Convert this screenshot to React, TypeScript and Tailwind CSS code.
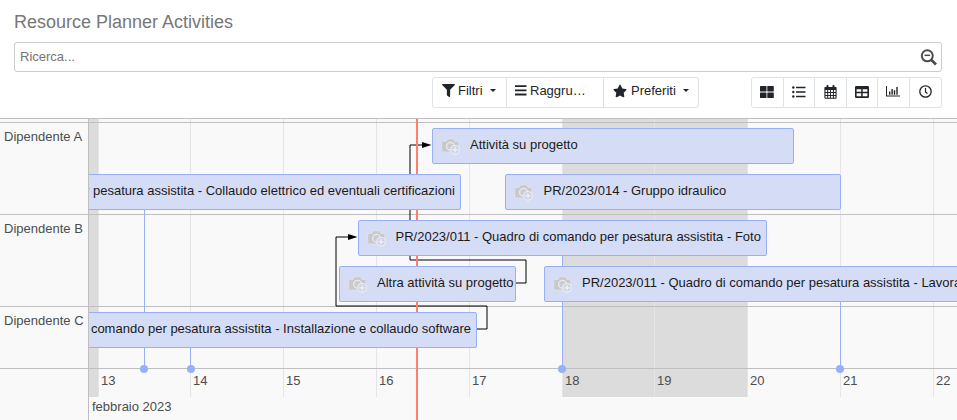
import React from "react";
import { FaFilter, FaStar } from "react-icons/fa";

type Item = { left: number; width: number; top: number; label: string; image?: boolean; pad: number; cut?: boolean };

const items: Item[] = [
  { left: 432, width: 362, top: 9, label: "Attività su progetto", image: true, pad: 37 },
  { left: -4, width: 376, top: 55, label: "r pesatura assistita - Collaudo elettrico ed eventuali certificazioni", pad: 0, cut: true },
  { left: 505, width: 336, top: 55, label: "PR/2023/014 - Gruppo idraulico", image: true, pad: 37.5 },
  { left: 358, width: 409, top: 101, label: "PR/2023/011 - Quadro di comando per pesatura assistita - Foto", image: true, pad: 36.5 },
  { left: 339, width: 177, top: 147, label: "Altra attività su progetto", image: true, pad: 37 },
  { left: 544, width: 500, top: 147, label: "PR/2023/011 - Quadro di comando per pesatura assistita - Lavorazione", image: true, pad: 37 },
  { left: -4, width: 392, top: 193, label: "comando per pesatura assistita - Installazione e collaudo software", pad: 0, cut: true },
];

const days = [
  { n: 13, x: 9 }, { n: 14, x: 101 }, { n: 15, x: 194 }, { n: 16, x: 287 }, { n: 17, x: 380 },
  { n: 18, x: 473 }, { n: 19, x: 565 }, { n: 20, x: 658 }, { n: 21, x: 751 }, { n: 22, x: 844 },
];

function Camera() {
  return (
    <svg width="20" height="18" viewBox="0 0 20 18" className="ml-2 mt-[8px] shrink-0">
      <path d="M1.500 4.500H5L6.500 1.800h6L14 4.500h2.800a1 1 0 0 1 1 1V15H1.500a.8.8 0 0 1-.8-.8V5.300a.8.8 0 0 1 .8-.8z" fill="#c9c9ca" stroke="#e2e3e8" strokeWidth=".8" />
      <circle cx="9.500" cy="9.300" r="3.900" fill="#cbcccf" stroke="#e8e9ef" strokeWidth="1.300" />
      <circle cx="14" cy="12.800" r="4.300" fill="#cdd2e0" stroke="#eceef6" strokeWidth="1.100" />
      <path d="M14 10v5.600M11.200 12.800h5.600" stroke="#f0f2f9" strokeWidth="1.300" />
    </svg>
  );
}

const viewIcons = [
  <svg key="g" width="14" height="12" viewBox="0 0 14 12" fill="currentColor"><rect width="6.500" height="5.600" rx=".6" /><rect x="7.300" width="6.500" height="5.600" rx=".6" /><rect y="6.400" width="6.500" height="5.600" rx=".6" /><rect x="7.300" y="6.400" width="6.500" height="5.600" rx=".6" /></svg>,
  <svg key="l" width="14" height="12" viewBox="0 0 14 12" fill="currentColor"><circle cx="1.300" cy="1.500" r="1.200" /><circle cx="1.300" cy="6" r="1.200" /><circle cx="1.300" cy="10.500" r="1.200" /><path d="M4 .8h9.500v1.400H4zM4 5.300h9.500v1.400H4zM4 9.800h9.500v1.400H4z" /></svg>,
  <svg key="c" width="13" height="14" viewBox="0 0 13 14" fill="currentColor"><path fillRule="evenodd" d="M1.200 2H2.500V.8a.8.8 0 0 1 .8-.8h.4a.8.8 0 0 1 .8.8V2h4V.8a.8.8 0 0 1 .8-.8h.4a.8.8 0 0 1 .8.8V2h1.300a.8.8 0 0 1 .8.8v10a1 1 0 0 1-1 1H1.400a1 1 0 0 1-1-1v-10a.8.8 0 0 1 .8-.8zM1.500 5v2h1.700V5zM4.200 5v2h1.900V5zM7 5v2h1.900V5zM9.900 5v2h1.600V5zM1.500 8v2h1.700V8zM4.200 8v2h1.900V8zM7 8v2h1.900V8zM9.900 8v2h1.600V8zM1.500 10.900v1.900h1.700v-1.900zM4.200 10.900v1.900h1.900v-1.900zM7 10.900v1.900h1.900v-1.900zM9.900 10.900v1.900h1.600v-1.900z" /></svg>,
  <svg key="t" width="14" height="12" viewBox="0 0 14 12" fill="currentColor"><path fillRule="evenodd" d="M1.200 0h11.600A1.200 1.200 0 0 1 14 1.200v9.600a1.200 1.200 0 0 1-1.200 1.200H1.200A1.200 1.200 0 0 1 0 10.800V1.200A1.200 1.200 0 0 1 1.200 0zM1.600 3.300v2.500h4.600V3.300zM7.700 3.300v2.500h4.700V3.300zM1.600 7.300v2.900h4.600V7.300zM7.700 7.300v2.900h4.700V7.300z" /></svg>,
  <svg key="b" width="14" height="11" viewBox="0 0 14 11" fill="currentColor"><path d="M0 0h1v9.600h13v1H0zM3 5.500h1.400v3.200H3zM5.400 3h1.400v5.700H5.400zM7.800 4.300h1.400v4.400H7.800zM10.300 1h1.400v7.700h-1.400z" /></svg>,
  <svg key="o" width="13" height="13" viewBox="0 0 13 13" fill="none" stroke="currentColor"><circle cx="6.500" cy="6.500" r="5.700" strokeWidth="1.300" /><path d="M6.500 3v4l2 1.500" strokeWidth="1.200" /></svg>,
];

function Caret() {
  return <span className="ml-[7px] border-x-[3px] border-t-[3px] border-x-transparent border-t-[#212529]" />;
}

export default function App() {
  return (
    <div className="flex h-[420px] w-[957px] flex-col overflow-hidden bg-white font-['Liberation_Sans',Arial,sans-serif] text-[13px] text-[#212529]">
      <header className="flex h-[118px] shrink-0 flex-col px-[14px] pr-[15px]">
        <h1 className="mt-[11px] h-[22px] text-[18px] leading-[22px] text-[#777]">Resource Planner Activities</h1>
        <div className="mt-[9px] flex h-[30px] items-center justify-between rounded-[3px] border border-[#ccc] pl-[5px] pr-[3px] text-[#757575]">
          <span>Ricerca...</span>
          <svg width="18" height="17" viewBox="0 0 18 17" fill="none" stroke="#4c4c4c"><circle cx="7.300" cy="6.800" r="5.500" strokeWidth="2" /><path d="M4.500 6.300h5.600" strokeWidth="1.500" /><path d="M11.500 11l4.500 4.500" strokeWidth="2.600" /></svg>
        </div>
        <div className="mt-[5px] flex h-[31px] justify-end">
          <div className="mr-[52px] flex rounded-[3px] border border-[#dee2e6]">
            <div className="flex w-[74px] items-center border-r border-[#dee2e6] pb-1 pl-[9px]"><FaFilter size={13} /><span className="ml-[3px]">Filtri</span><Caret /></div>
            <div className="flex w-[97px] items-center border-r border-[#dee2e6] pb-1 pl-[8px]"><svg width="12" height="11" viewBox="0 0 12 11" fill="currentColor"><path d="M0 .2h11.500v1.800H0zM0 4.400h11.500v1.800H0zM0 8.600h11.500v1.800H0z" /></svg><span className="ml-[3px]">Raggru…</span></div>
            <div className="flex w-[94px] items-center pb-1 pl-[9px]"><FaStar size={14} /><span className="ml-[4px]">Preferiti</span><Caret /></div>
          </div>
          <div className="grid w-[191px] grid-cols-6 divide-x divide-[#dee2e6] rounded-[3px] border border-[#dee2e6]">
            {viewIcons.map((icon, i) => <div key={i} className="flex items-center justify-center pb-[2px]">{icon}</div>)}
          </div>
        </div>
      </header>
      <main className="relative flex h-[302px] shrink-0 overflow-hidden border-t border-[#bfbfbf] bg-[#f9f9f9] text-[#4d4d4d]">
        <aside className="flex w-[89px] shrink-0 flex-col border-r border-[#bfbfbf] pt-[3px]">
          {["A", "B", "C"].map((g) => (
            <div key={g} className="h-[92px] pl-[4px] pt-[6px] leading-[18px] last:h-[62px]">Dipendente {g}</div>
          ))}
        </aside>
        <section className="relative grow overflow-hidden">
          <div className="absolute left-0 top-0 h-[278px] w-[9px] bg-[#dcdcdc]" />
          <div className="absolute left-[473px] top-0 h-[278px] w-[185px] bg-[#dcdcdc]" />
          {days.map((d) => (
            <div key={d.n} className="absolute top-0 h-[278px] w-px bg-[#e5e5e5]" style={{ left: d.x }}>
              <span className="absolute left-[3px] top-[253px] leading-[18px]">{d.n}</span>
            </div>
          ))}
          <span className="absolute left-[3px] top-[279px] leading-[18px]">febbraio 2023</span>
        </section>
        <div className="absolute left-0 top-[3px] h-px w-full bg-[#bfbfbf]" />
        <div className="absolute left-0 top-[95px] h-px w-full bg-[#bfbfbf]" />
        <div className="absolute left-0 top-[187px] h-px w-full bg-[#bfbfbf]" />
        <div className="absolute left-0 top-[249px] h-px w-full bg-[#bfbfbf]" />
        <div className="absolute left-[144px] top-[90px] h-[160px] w-px bg-[#97b0f8]" />
        <div className="absolute left-[190px] top-[228px] h-[22px] w-px bg-[#97b0f8]" />
        <div className="absolute left-[562px] top-[136px] h-[114px] w-px bg-[#97b0f8]" />
        <div className="absolute left-[840px] top-[182px] h-[68px] w-px bg-[#97b0f8]" />
        <svg className="absolute left-0 top-0" width="957" height="301" viewBox="0 119 957 301" fill="none">
          <path d="M516 283H526V260H410V145H424M477 329H487V306H336V237H350" stroke="#000" />
          <path d="M422 142l9.500 3-9.500 3zM348 234l9.500 3-9.500 3z" fill="#000" />
        </svg>
        <div className="absolute left-[416px] top-0 h-[301px] w-[2px] bg-[#ff7f6e]" />
        {[144, 191, 562, 840].map((x) => (
          <div key={x} className="absolute top-[246px] size-2 rounded-full bg-[#97b0f8]" style={{ left: x - 4 }} />
        ))}
        <div className="absolute bottom-0 left-[89px] right-0 top-0 overflow-hidden">
          {items.map((it) => (
            <div key={it.label} className="absolute flex h-9 whitespace-nowrap rounded-[2px] border border-[#97b0f8] bg-[#d5ddf6] text-[#1a1a1a]" style={{ left: it.cut ? it.left : it.left - 89, width: it.width, top: it.top }}>
              {it.image && <Camera />}
              <span className="absolute top-[7px] leading-[18px]" style={it.cut ? { right: 5 } : { left: it.pad }}>{it.label}</span>
            </div>
          ))}
        </div>
      </main>
    </div>
  );
}
